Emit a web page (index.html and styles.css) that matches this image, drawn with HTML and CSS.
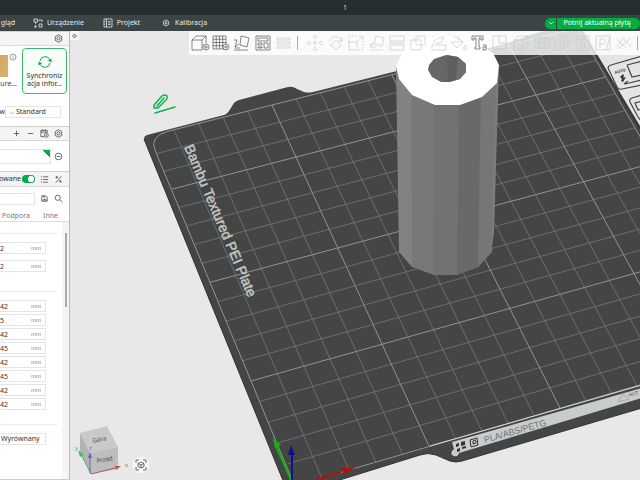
FILE: index.html
```
<!DOCTYPE html>
<html lang="pl">
<head>
<meta charset="utf-8">
<title>1</title>
<link rel="stylesheet" href="styles.css">
</head>
<body>
<div class="app">
  <header class="titlebar"><span>1</span></header>
  <nav class="tabs">
    <a class="tab tab-first" href="#">gląd</a>
    <a class="tab tab-device" href="#"><svg class="ic" viewBox="0 0 10 10"><path d="M1 1h3.500v3h-3.500zM2.700 4v2M1 9h3M2.500 7v2M6 2h3v2M6 6h3v3h-3zM5.500 2.500h1"/></svg>Urządzenie</a>
    <a class="tab tab-project" href="#"><svg class="ic" viewBox="0 0 10 10"><path d="M1 1h8v8h-8zM3.500 1v8M5 3.500h2.500M5 5h2.500M5 6.500h2.500M1.700 3.500h1M1.700 6h1"/></svg>Projekt</a>
    <a class="tab tab-calib" href="#"><svg class="ic" viewBox="0 0 10 10"><path d="M5 2l2.600 1.500v3l-2.600 1.500-2.600-1.500v-3z"/><circle cx="5" cy="5" r="1"/></svg>Kalibracja</a>
    <div class="slice">
      <button class="slice-menu" aria-label="Opcje"><svg viewBox="0 0 8 8"><path d="M2 3l2 2 2-2"/></svg></button>
      <button class="slice-go">Potnij aktualną płytę</button>
    </div>
  </nav>
  <div class="work">
    <aside class="side">
      <div class="panel">
        <div class="head head-top"><button class="ib" aria-label="Ustawienia drukarki"><svg viewBox="0 0 10 10"><path d="M5 .8l3.600 2.100v4.200l-3.600 2.100-3.600-2.100v-4.200z"/><circle cx="5" cy="5" r="1.700"/></svg></button></div>
        <div class="cards">
          <div class="plate-card"><div class="thumb-row"><span class="thumb"></span><svg class="info" viewBox="0 0 8 8"><circle cx="4" cy="4" r="3"/><path d="M4 3.500v2.200M4 2v.6"/></svg></div><span>ture...</span></div>
          <button class="sync"><svg viewBox="0 0 16 16"><path d="M3 7a5.200 5.200 0 0 1 9.800-1.500M13 9a5.200 5.200 0 0 1-9.800 1.500"/><path class="fill" d="M14.500 4.500v4l-3.500-2zM1.500 11.500v-4l3.500 2z"/></svg><span>Synchroniz<br>acja infor...</span></button>
        </div>
        <div class="nozzle"><label for="flow">w</label><select id="flow"><option>Standard</option></select></div>
        <div class="head head-icons">
          <button class="ib" aria-label="Dodaj"><svg viewBox="0 0 10 10"><path d="M5 2v6M2 5h6"/></svg></button>
          <button class="ib" aria-label="Usuń"><svg viewBox="0 0 10 10"><path d="M2 5h6"/></svg></button>
          <button class="ib" aria-label="Synchronizuj"><svg viewBox="0 0 10 10"><path d="M4.500 8.500h-3.500v-7h7v2.500M1 3.500h7M3 .5v2M6 .5v2"/><circle cx="7" cy="7" r="2.200"/><path d="M6.200 7h1.600"/></svg></button>
          <button class="ib" aria-label="Ustawienia filamentu"><svg viewBox="0 0 10 10"><path d="M5 .8l3.600 2.100v4.200l-3.600 2.100-3.600-2.100v-4.200z"/><circle cx="5" cy="5" r="1.700"/></svg></button>
        </div>
        <div class="filament"><button class="fil-box" aria-label="Filament"></button><button class="ib" aria-label="Usuń filament"><svg viewBox="0 0 10 10"><circle cx="5" cy="5" r="3.700"/><path d="M3 5h4"/></svg></button></div>
        <div class="head head-mode">
          <label class="mode" for="adv">sowane</label><input class="toggle" id="adv" type="checkbox" checked>
          <button class="ib" aria-label="Lista"><svg viewBox="0 0 10 10"><path d="M3.500 2h5.500M3.500 5h5.500M3.500 8h5.500M1 2h1M1 5h1M1 8h1"/></svg></button>
          <button class="ib" aria-label="Porównaj"><svg viewBox="0 0 10 10"><path d="M8 1.500l-6 7M1.500 2.500h3M3 1v3M5.500 7h3M7 5.500v3"/></svg></button>
        </div>
        <div class="search"><input class="search-box" type="text" aria-label="Szukaj"><button class="ib" aria-label="Zapisz"><svg viewBox="0 0 10 10"><path d="M2 2h4.500l1.500 1.500v4.500h-6zM4 2v1.500h2M4 8v-2h2.500v2"/></svg></button><button class="ib" aria-label="Szukaj ustawienia"><svg viewBox="0 0 10 10"><circle cx="4.200" cy="4.200" r="2.900"/><path d="M6.400 6.400l2.900 2.900"/></svg></button></div>
        <div class="subtabs"><a href="#">Podpora</a><a href="#">Inne</a></div>
        <div class="params">
          <div class="groups">
            <div class="group wide">
              <label class="field"><input type="text" value="0,2"><span>mm</span></label>
              <label class="field"><input type="text" value="0,2"><span>mm</span></label>
            </div>
            <div class="group">
              <label class="field"><input type="text" value="0,42"><span>mm</span></label>
              <label class="field"><input type="text" value="0,5"><span>mm</span></label>
              <label class="field"><input type="text" value="0,42"><span>mm</span></label>
              <label class="field"><input type="text" value="0,45"><span>mm</span></label>
              <label class="field"><input type="text" value="0,42"><span>mm</span></label>
              <label class="field"><input type="text" value="0,45"><span>mm</span></label>
              <label class="field"><input type="text" value="0,42"><span>mm</span></label>
              <label class="field"><input type="text" value="0,42"><span>mm</span></label>
            </div>
            <div class="group"><select class="seam" aria-label="Pozycja szwu"><option>Wyrównany</option></select></div>
          </div>
          <div class="track"><div class="thumb-bar"></div></div>
        </div>
      </div>
    </aside>
    <main class="view">
      <svg class="scene" viewBox="70 31 570 449" preserveAspectRatio="xMinYMin slice">
        <path class="plate" d="M144 139Q144 136 147 135L224 115Q227 114 229 111L234 103Q236 101 239 100L288 87Q293 86 297 89L304 92Q308 93 313 92L505 44L530 35L551 29H582L642 129V408L462 461Q456 463 450 461L436 455Q428 452 420 455L330 483H284Z"/>
        <path class="plate-side" d="M144 139L284 483M330 483L420 455Q428 452 436 455L450 461Q456 463 462 461L642 408"/>
        <g id="grid"></g>
        <path class="beyond" d="M583 29L642 127V29Z"/>
        <path class="beyond-edge" d="M582 31L640 129"/>
        <g class="sticker">
          <path d="M611 65L642 56M608 68L617 87Q618 90 622 89L642 85M608 68Q608 66 611 65M627 65L642 61M627 65L632 77L642 75M625 84L642 80M624 84L628 81"/>
          <path class="solid" d="M620 77l3-3 1 2-1 2 3-1-3 5-2-1 1-2z"/>
          <path d="M642 95L632 98Q629 99 630 102L638 117L642 122M642 101L635 103L638 110L642 109"/>
        </g>
        <text class="auto" transform="translate(615 74) rotate(-15)">AUTO</text>
        <path class="strip" d="M452 442L642 388V398L459 453Q458 457 454 456Q450 455 452 451L454 449Z"/>
        <path class="strip-line" d="M430 446L642 385"/>
        <g class="marks"><path d="M456 444l3-1v3l-3 1zM461 442l4-1v4l-4 1zM457 449l3-1v3l-3 1zM462 447l4-1v2l-4 1z"/><path class="hollow" d="M470 440l7-2 1 7-7 2zM476 440l-3 1v3l3-1v-2"/><path class="tri" d="M618 402l5-8 6 5z"/></g>
        <text class="strip-text" transform="translate(485 443) rotate(-16)">PLA/ABS/PETG</text>
        <text class="strip-small" transform="translate(629 397) rotate(-16)">HOT</text>
        <text class="brand" transform="translate(184 147) rotate(67)">Bambu Textured PEI Plate</text>
        <g class="tube">
          <path fill="#828282" d="M396 66L399 252L412 267V92Z"/><path fill="#787878" d="M411 90L412 267L434 275L435 100Z"/><path fill="#727272" d="M434 100L433 275H458L460 100Z"/><path fill="#696969" d="M459 100L457 275L479 267L482 90Z"/><path fill="#767676" d="M481 90L478 267L492 252L497 76Z"/><path fill="#7c7c7c" d="M496 80L491 252L494 233L499 66Z"/>
          <path fill="#fff" d="M396 66L399 79L412 95L435 105H460L482 97L497 83L499 65L493 53L478 43L450 37H425L405 47Z"/>
          <path fill="#666" d="M429 65L434 59L446 55L458 57L466 64V72L460 79L450 82H441L432 77L428 70Z"/><path fill="#5f5f5f" d="M447 55L458 57L456 80L448 82Z"/><path fill="#6e6e6e" d="M458 57L466 64V72L460 79L456 80Z"/>
        </g>
        <g class="axes">
          <path stroke="#12b212" d="M292 482L276 446"/><path fill="#12b212" d="M273 438l8 7-6 3z"/>
          <path stroke="#b01010" d="M296 486L341 472"/><path fill="#b01010" d="M355 468l-14 0 3 6z"/>
          <path stroke="#101090" d="M292 482V454"/><path fill="#101090" d="M291 445l4 10h-7z"/>
        </g>
        <g class="pencil"><path d="M154 108L154 105L162 96Q165 94 167 96Q168 98 166 100L158 108ZM157 106L164 98M155 113L175 107"/></g>
        <g class="cube">
          <path fill="#c9c9c9" d="M80 433L107 426L118 447L90 453Z"/><path fill="#bdbdbd" d="M90 453L118 447V469L91 474Z"/><path fill="#b3b3b3" d="M80 433L90 453L91 474L80 453Z"/>
          <path stroke="#b8565c" d="M91 474L115 468"/><path fill="#b8565c" d="M121 466l-6 0 1 4z"/>
          <path stroke="#58b060" d="M91 474L82 456"/><path fill="#58b060" d="M78 450l6 5-4 2z"/>
          <path stroke="#6a62c4" d="M90 473V457"/><path fill="#6a62c4" d="M90 452l2 6h-4z"/>
          <text transform="translate(93 443) rotate(-12)">Góra</text><text transform="translate(97 463) rotate(-10)">Przód</text>
          <text fill="#58b060" x="75" y="450">y</text><text fill="#6a62c4" x="89" y="450">z</text><text fill="#b8565c" x="125" y="467">x</text>
          <circle cx="141" cy="465" r="8" fill="#fafafa"/><path class="home" d="M136 463v-3h3M143 460h3v3M146 467v3h-3M139 470h-3v-3M141 462l3 1.500v3l-3 1.500-3-1.500v-3zM138 463.500l3 1.500 3-1.500M141 465v3"/>
        </g>
      </svg>
      <button class="eye" aria-label="Widok"><svg viewBox="0 0 8 6"><path d="M1 3q3-4 6 0q-3 4-6 0z"/><circle cx="4" cy="3" r="1"/></svg></button>
      <div class="toolbar">
        <button class="tool" aria-label="Dodaj model"><svg viewBox="0 0 16 16"><path d="M0 5h10v10h-10zM0 5l4-4h10l-4 4M14 1v7"/><circle class="bg" cx="14" cy="12" r="3"/><path d="M14 10v4M12 12h4"/></svg></button>
        <button class="tool" aria-label="Dodaj płytę"><svg viewBox="0 0 16 16"><path d="M0 1h13v13h-13zM3.250 1v13M6.500 1v13M9.750 1v13M0 4.250h13M0 7.500h13M0 10.750h13"/><circle class="bg" cx="13" cy="12" r="3"/><path d="M13 10v4M11 12h4"/></svg></button>
        <button class="tool" aria-label="Orientuj"><svg viewBox="0 0 16 16"><path d="M7 1l8 2-2 9-7-2zM0 15h14M1 13h5M0 5h3l-2 7M1 12l4-3"/></svg></button>
        <button class="tool" aria-label="Rozmieść"><svg viewBox="0 0 16 16"><path d="M1 1h14v14h-14zM3 3h10v3h-10zM3 8h4v2h-4zM3 12h4v1h-4zM9 8h4v5h-4z"/></svg></button>
        <button class="tool off" aria-label="Warstwy"><svg viewBox="0 0 16 16"><path d="M1 3h13v2h-13zM1 7h13v2h-13zM1 11h13v2h-13z"/></svg></button>
        <span class="bar"></span>
        <div class="tools">
          <button class="tool off" aria-label="Przesuń"><svg viewBox="0 0 16 16"><path d="M8 0l2 2-2 2-2-2zM8 16l2-2-2-2-2 2zM0 8l2-2 2 2-2 2zM16 8l-2-2-2 2 2 2z"/><circle cx="8" cy="8" r="1.200"/></svg></button>
          <button class="tool off" aria-label="Obróć"><svg viewBox="0 0 16 16"><path d="M8 5l5 5-5 5-5-5zM1 6q4-7 11-3l2 3M14 2v4h-4"/></svg></button>
          <button class="tool off" aria-label="Skaluj"><svg viewBox="0 0 16 16"><path d="M1 7h8v8h-8zM9 7l6-6M11 1h4v4"/><path stroke-dasharray="2 1" d="M1 7v-6h9M15 6v9h-6"/></svg></button>
          <button class="tool off" aria-label="Połóż na ścianie"><svg viewBox="0 0 16 16"><path d="M7 1l8 2-2 8-8-2zM1 15h13M1 12h6M2 11l2-4M1 9l3 1"/></svg></button>
          <button class="tool off" aria-label="Przetnij"><svg viewBox="0 0 16 16"><path d="M1 1h14v5h-14zM1 10h14v5h-14zM0 8h16"/></svg></button>
          <button class="tool off" aria-label="Operacje logiczne"><svg viewBox="0 0 16 16"><path d="M1 5h10v10h-10zM6 1h9v9h-9z"/></svg></button>
          <button class="tool off" aria-label="Podpory"><svg viewBox="0 0 16 16"><path d="M1 10h14v5h-14zM2 8q3-6 10-5M5 8h4l3-4M12 1v4"/></svg></button>
          <button class="tool off" aria-label="Malowanie"><svg viewBox="0 0 16 16"><path d="M0 7h12l-6 6zM3 1l9 6M6 1l4 4M14 10q3 5 0 5t0-5"/></svg></button>
          <button class="tool" aria-label="Tekst"><svg viewBox="0 0 16 16"><path d="M0 1h11v4h-2v-2h-2v9h1v2h-5v-2h1v-9h-2v2h-2zM11 10h3v5h-3v-3h3"/></svg></button>
          <button class="tool off" aria-label="Znacznik"><svg viewBox="0 0 16 16"><path d="M1 1h13v13h-13zM7 1v7h7"/></svg></button>
          <button class="tool off" aria-label="Bryła"><svg viewBox="0 0 16 16"><path d="M1 5h9v10h-9zM1 5l4-4h10l-5 4M15 1v9l-5 5"/></svg></button>
          <button class="tool off" aria-label="Pomiar"><svg viewBox="0 0 16 16"><path d="M1 3h14v10h-14zM5 3v10M11 3v10M5 8h6"/></svg></button>
          <button class="tool off" aria-label="Złożenie"><svg viewBox="0 0 16 16"><path d="M1 5h9v10h-9zM4 2h10v9h-4M3 8h5M3 11h5"/></svg></button>
          <button class="tool off" aria-label="Szew"><svg viewBox="0 0 16 16"><path d="M2 1h12v14h-12zM6 4h4v8h-4zM8 1v3"/></svg></button>
          <button class="tool off" aria-label="Parking"><svg viewBox="0 0 16 16"><path d="M1 1h14v14h-14zM5 13v-9h4q3 2 0 5h-4M15 1l-4 14"/></svg></button>
          <button class="tool off" aria-label="Widok złożenia"><svg viewBox="0 0 16 16"><path d="M1 12l6-9 8 9M2 14l13-11M1 4l9 9"/></svg></button>
        </div>
        <span class="bar"></span>
      </div>
    </main>
  </div>
</div>
<script src="grid.js"></script>
</body>
</html>
```
FILE: grid.js
```
// Projects bed coordinates in millimetres to the scene and draws the bed grid.
const SIZE = 180;
function project(x, y) {
  const u = x / 150, v = (y - 50) / 100;
  const w = 0.04103 * u + 0.0612 * v + 1;
  return [
    ((409.01 * u - 69.22 * v + 251) / w).toFixed(1),
    ((-96.17 * u - 180.11 * v + 381) / w).toFixed(1)
  ].join(" ");
}
const grid = document.getElementById("grid");
function draw(d, cls) {
  const p = document.createElementNS("http://www.w3.org/2000/svg", "path");
  p.setAttribute("d", d);
  p.setAttribute("class", cls);
  grid.appendChild(p);
}
for (let t = 10; t < SIZE; t += 10) {
  const cls = t % 50 === 0 ? "major" : "minor";
  draw(`M${project(t, 0)}L${project(t, SIZE)}`, cls);
  draw(`M${project(0, t)}L${project(SIZE, t)}`, cls);
}
draw(`M${project(0, 0)}L${project(0, 172)}Q${project(0, 180)} ${project(8, 180)}L${project(180, 180)}L${project(180, 0)}Z`, "major");
```
FILE: styles.css
```
* { box-sizing: border-box; }
body { margin: 0; font: 7px/8px "Noto Sans", "Open Sans", sans-serif; color: #333; }
button, input, select { font: inherit; color: inherit; margin: 0; padding: 0; border: 0; background: none; appearance: none; border-radius: 0; }
svg { display: block; fill: none; stroke: currentColor; }
a { color: inherit; text-decoration: none; }

.app { display: grid; grid-template-rows: 15px 16px minmax(0, 1fr); height: 100vh; overflow: hidden; }
.titlebar { background: #262e30; color: #d8dcdc; display: flex; align-items: center; justify-content: center; padding-left: 50px; }
.tabs { background: #3c4546; color: #e8eaea; display: flex; align-items: center; }
.tab { display: flex; align-items: center; gap: 4px; white-space: nowrap; }
.tab-first { width: 15px; justify-content: flex-end; }
.tab-device { margin-left: 18px; }
.tab-project { margin-left: 19px; }
.tab-calib { margin-left: 21px; }
.ic { width: 10px; height: 10px; stroke-width: .8; }
.slice { margin-left: auto; display: flex; gap: 1px; width: 95px; height: 11px; color: #fff; }
.slice button { background: #00ae42; }
.slice-menu { width: 11px; border-radius: 6px 0 0 6px; display: grid; place-items: center; }
.slice-menu svg { width: 8px; height: 8px; stroke-width: .8; }
.slice-go { flex: 1; white-space: nowrap; padding-right: 3px; border-radius: 0 6px 6px 0; }

.work { display: grid; grid-template-columns: 70px minmax(0, 1fr); min-height: 0; }
.side { display: flex; justify-content: flex-end; overflow: hidden; background: #fff; border-right: 1px solid #b8b8b8; border-bottom: 1px solid #ccc; }
.panel { flex: none; width: 200px; display: flex; flex-direction: column; }
.head { display: flex; align-items: center; justify-content: flex-end; gap: 4px; padding-right: 6px; background: #f4f4f4; border-bottom: 1px solid #d8d8d8; border-top: 1px solid #d0d0d0; height: 15px; }
.ib { width: 10px; height: 10px; display: grid; place-items: center; color: #4c4c4c; }
.ib svg { width: 9px; height: 9px; stroke-width: .9; }
.cards { display: flex; justify-content: flex-end; gap: 5px; height: 49px; padding: 2px 2px 2px 0; }
.plate-card { width: 60px; padding-top: 5px; display: flex; flex-direction: column; align-items: flex-end; color: #444; }
.thumb-row { display: flex; height: 25px; margin-bottom: 2px; gap: 1px; }
.thumb { width: 40px; height: 22px; margin-top: 2px; background: linear-gradient(135deg, #c79c5b, #d9b271); }
.info { width: 8px; height: 8px; stroke: #888; stroke-width: .8; }
.sync { width: 45px; height: 46px; border: 1px solid #3cba6b; border-radius: 4px; background: #f8fdfa; display: flex; flex-direction: column; align-items: center; justify-content: center; gap: 2px; white-space: nowrap; }
.sync svg { width: 16px; height: 16px; stroke: #00ae42; stroke-width: 1; }
.sync .fill { fill: #00ae42; stroke: none; }
.nozzle { display: flex; justify-content: flex-end; align-items: center; height: 31px; padding: 3px 8px 0 0; }
.nozzle select { width: 56px; height: 12px; border: 1px solid #e4e4e4; padding-left: 10px; background: url("data:image/svg+xml,%3Csvg xmlns='http://www.w3.org/2000/svg' width='6' height='6'%3E%3Cpath d='M1 2l2 2 2-2' fill='none' stroke='%23bbb'/%3E%3C/svg%3E") 3px 3px no-repeat; }
.filament { display: flex; justify-content: flex-end; align-items: center; gap: 2px; height: 30px; padding-right: 6px; }
.fil-box { width: 120px; height: 15px; border: 1px solid #e2e2e2; background: linear-gradient(45deg, transparent 50%, #00ae42 50%) right top / 8px 8px no-repeat; }
.head-mode { height: 16px; }
.mode { white-space: nowrap; margin-right: -3px; }
.toggle { width: 13px; height: 8px; border-radius: 4px; background: radial-gradient(circle at 9px 4px, #fff 3px, #00ae42 3px); }
.search { display: flex; justify-content: flex-end; align-items: center; gap: 4px; height: 23px; padding-right: 6px; }
.search-box { width: 100px; height: 12px; border: 1px solid #e4e4e4; }
.subtabs { display: flex; justify-content: flex-end; align-items: center; gap: 13px; height: 12px; padding-right: 11px; color: #777; border-bottom: 1px solid #ddd; }
.params { flex: 1; display: flex; min-height: 0; }
.groups { flex: 1; display: flex; flex-direction: column; padding-top: 11px; }
.group { border-top: 1px solid #eee; margin-right: 4px; padding: 8px 12px 14px 0; display: flex; flex-direction: column; align-items: flex-end; gap: 2px; }
.group.wide { gap: 6px; padding-bottom: 19px; }
.field { width: 56px; height: 12px; border: 1px solid #e2e4e6; display: flex; align-items: center; padding: 0 4px 0 3px; }
.field input { flex: 1; width: 30px; height: 10px; }
.field span { font: 6px/8px "Liberation Sans", sans-serif; color: #8a8a8a; }
.seam { width: 56px; height: 12px; border: 1px solid #e2e4e6; padding-left: 10px; }
.track { width: 7px; background: #f5f5f5; padding: 11px 0 0 3px; }
.thumb-bar { width: 2px; height: 74px; background: #a8a8a8; }

.view { position: relative; overflow: hidden; background: #e8e8e8; }
.scene { width: 100%; height: 100%; stroke: none; }
.plate { fill: #444645; }
.plate-side { fill: none; stroke: #303232; stroke-width: 1; }
.minor { fill: none; stroke: #7c7e7d; stroke-width: .7; }
.major { fill: none; stroke: #929493; stroke-width: 1; }
.beyond { fill: #e4e4e4; }
.beyond-edge { stroke: #303232; stroke-width: 1; }
.sticker { fill: none; stroke: #444; stroke-width: 1.2; }
.sticker .solid { fill: #333; stroke: none; }
.auto { font-size: 4px; font-weight: bold; fill: #444; }
.strip { fill: #c9cccc; }
.strip-line { stroke: #d8d8d8; stroke-width: 1; }
.marks { fill: #333; }
.marks .hollow { fill: none; stroke: #333; stroke-width: 1; }
.marks .tri { fill: none; stroke: #aaa; stroke-width: 1; }
.strip-text { font: 9px "Liberation Sans", sans-serif; fill: #6c7070; }
.strip-small { font-size: 5px; fill: #606464; }
.brand { font: 14px "Liberation Sans", sans-serif; fill: #c2c4c3; stroke: #c2c4c3; stroke-width: .5; }
.axes { stroke-width: 2; }
.axes path[fill], .cube path[fill] { stroke: none; }
.pencil { fill: none; stroke: #10b04a; stroke-width: 1.5; stroke-linecap: round; stroke-linejoin: round; }
.pencil path { fill: none; }
.cube { font-size: 6px; fill: #444; }
.cube .home { fill: none; stroke: #444; stroke-width: .8; }
.eye { position: absolute; top: 0; left: 0; width: 9px; height: 9px; background: #f8f8f8; color: #777; display: grid; place-items: center; }
.eye svg { width: 7px; height: 6px; stroke-width: .8; }
.toolbar { position: absolute; top: 0; left: 119px; right: 0; height: 24px; padding: 0 2px 0 3px; background: rgba(255, 255, 255, .8); display: flex; align-items: center; gap: 5px; }
.tool { width: 16px; height: 16px; color: #555; flex: none; }
.tool svg { width: 16px; height: 16px; stroke-width: .7; overflow: visible; }
.tool .bg { fill: #fff; }
.tool.off { color: #c8c8c8; }
.bar { width: 1px; height: 14px; background: #aaa; }
.tools { flex: 1; display: flex; justify-content: space-between; padding-left: 4px; }
```
